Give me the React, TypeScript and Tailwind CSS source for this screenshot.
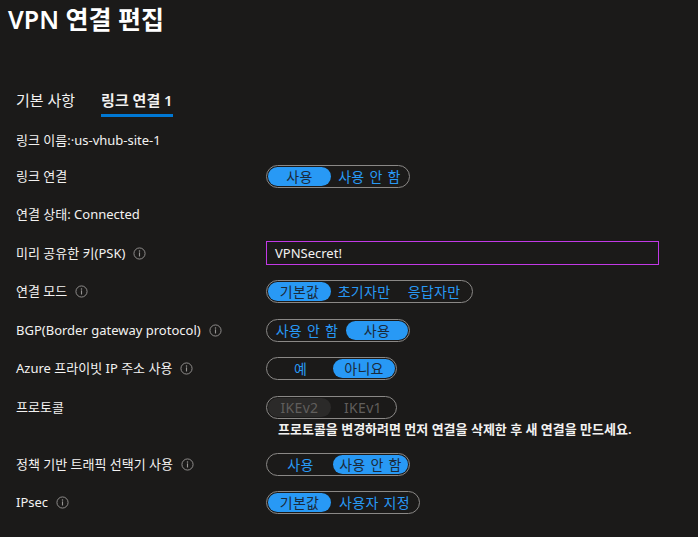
import React from 'react'

const font = { fontFamily: '"Segoe UI", "Noto Sans", "Noto Sans CJK KR", sans-serif' }

type Seg = { label: string; w: string }

function Info() {
  return (
    <svg width="13" height="13" viewBox="0 0 14 14" className="ml-2 shrink-0 text-[#979593]">
      <circle cx="7" cy="7" r="6" fill="none" stroke="currentColor" strokeWidth="1" />
      <circle cx="7" cy="4.2" r="0.8" fill="currentColor" />
      <rect x="6.4" y="5.8" width="1.2" height="4.4" fill="currentColor" />
    </svg>
  )
}

function Toggle({ segs, active, disabled }: { segs: Seg[]; active: number; disabled?: boolean }) {
  return (
    <div className="inline-flex h-[23px] items-center rounded-full border border-[#8a8886] p-px">
      {segs.map((s, i) => {
        const on = i === active
        let cls = 'text-[#2899f5]'
        if (disabled) cls = on ? 'bg-[#2b2a29] text-[#605e5c]' : 'text-[#605e5c]'
        else if (on) cls = 'bg-[#2899f5] text-[#1b2a3a]'
        return (
          <div
            key={i}
            className={`flex h-[19px] items-center justify-center rounded-full text-[14px] tracking-[0.3px] [word-spacing:1px] ${s.w} ${cls}`}
          >
            {s.label}
          </div>
        )
      })}
    </div>
  )
}

function Row({ label, info, children }: { label: string; info?: boolean; children?: React.ReactNode }) {
  return (
    <div className="flex h-[38.5px] items-center">
      <div className="flex w-[250px] items-center text-[13px] text-[#f3f2f1]">
        {label}
        {info && <Info />}
      </div>
      {children}
    </div>
  )
}

export default function App() {
  return (
    <div className="h-[537px] w-[698px] overflow-hidden bg-[#1b1a19] px-4 text-white" style={font}>
      <h1 className="-ml-2 pt-[3px] text-[25px] font-semibold leading-[32px] text-white">VPN 연결 편집</h1>

      {/* onglets */}
      <div className="mt-[51px] flex gap-[26px] text-[15px] leading-[20px]">
        <div className="h-[31px] border-b-[3px] border-transparent pt-[4px] text-[#f3f2f1]">기본 사항</div>
        <div className="h-[31px] border-b-[3px] border-[#0078d4] pt-[4px] font-semibold text-[#f3f2f1]">링크 연결 1</div>
      </div>

      <div className="mt-[7px]">
        <div className="flex h-[33px] items-center text-[13px] text-[#f3f2f1]">링크 이름:·us-vhub-site-1</div>
        <Row label="링크 연결">
          <Toggle active={0} segs={[{ label: '사용', w: 'w-[63px]' }, { label: '사용 안 함', w: 'w-[77px]' }]} />
        </Row>
        <Row label="연결 상태: Connected" />
        <Row label="미리 공유한 키(PSK)" info>
          <div className="flex h-[24px] w-[393px] items-center border border-[#c239e6] px-2 text-[13px] text-[#f3f2f1]">VPNSecret!</div>
        </Row>
        <Row label="연결 모드" info>
          <Toggle
            active={0}
            segs={[
              { label: '기본값', w: 'w-[63px]' },
              { label: '초기자만', w: 'w-[66px]' },
              { label: '응답자만', w: 'w-[74px]' },
            ]}
          />
        </Row>
        <Row label="BGP(Border gateway protocol)" info>
          <Toggle active={1} segs={[{ label: '사용 안 함', w: 'w-[78px]' }, { label: '사용', w: 'w-[62px]' }]} />
        </Row>
        <Row label="Azure 프라이빗 IP 주소 사용" info>
          <Toggle active={1} segs={[{ label: '예', w: 'w-[65px]' }, { label: '아니요', w: 'w-[62px]' }]} />
        </Row>
        <div className="flex h-[57px] pt-[8px]">
          <div className="w-[250px] pt-[2px] text-[13px] text-[#f3f2f1]">프로토콜</div>
          <div className="flex flex-col items-start">
            <Toggle disabled active={0} segs={[{ label: 'IKEv2', w: 'w-[63px]' }, { label: 'IKEv1', w: 'w-[64px]' }]} />
            <div className="ml-[12px] mt-[1px] text-[13px] font-semibold text-[#f3f2f1]">
              프로토콜을 변경하려면 먼저 연결을 삭제한 후 새 연결을 만드세요.
            </div>
          </div>
        </div>
        <Row label="정책 기반 트래픽 선택기 사용" info>
          <Toggle active={1} segs={[{ label: '사용', w: 'w-[65px]' }, { label: '사용 안 함', w: 'w-[75px]' }]} />
        </Row>
        <Row label="IPsec" info>
          <Toggle active={0} segs={[{ label: '기본값', w: 'w-[63px]' }, { label: '사용자 지정', w: 'w-[87px]' }]} />
        </Row>
      </div>
    </div>
  )
}
